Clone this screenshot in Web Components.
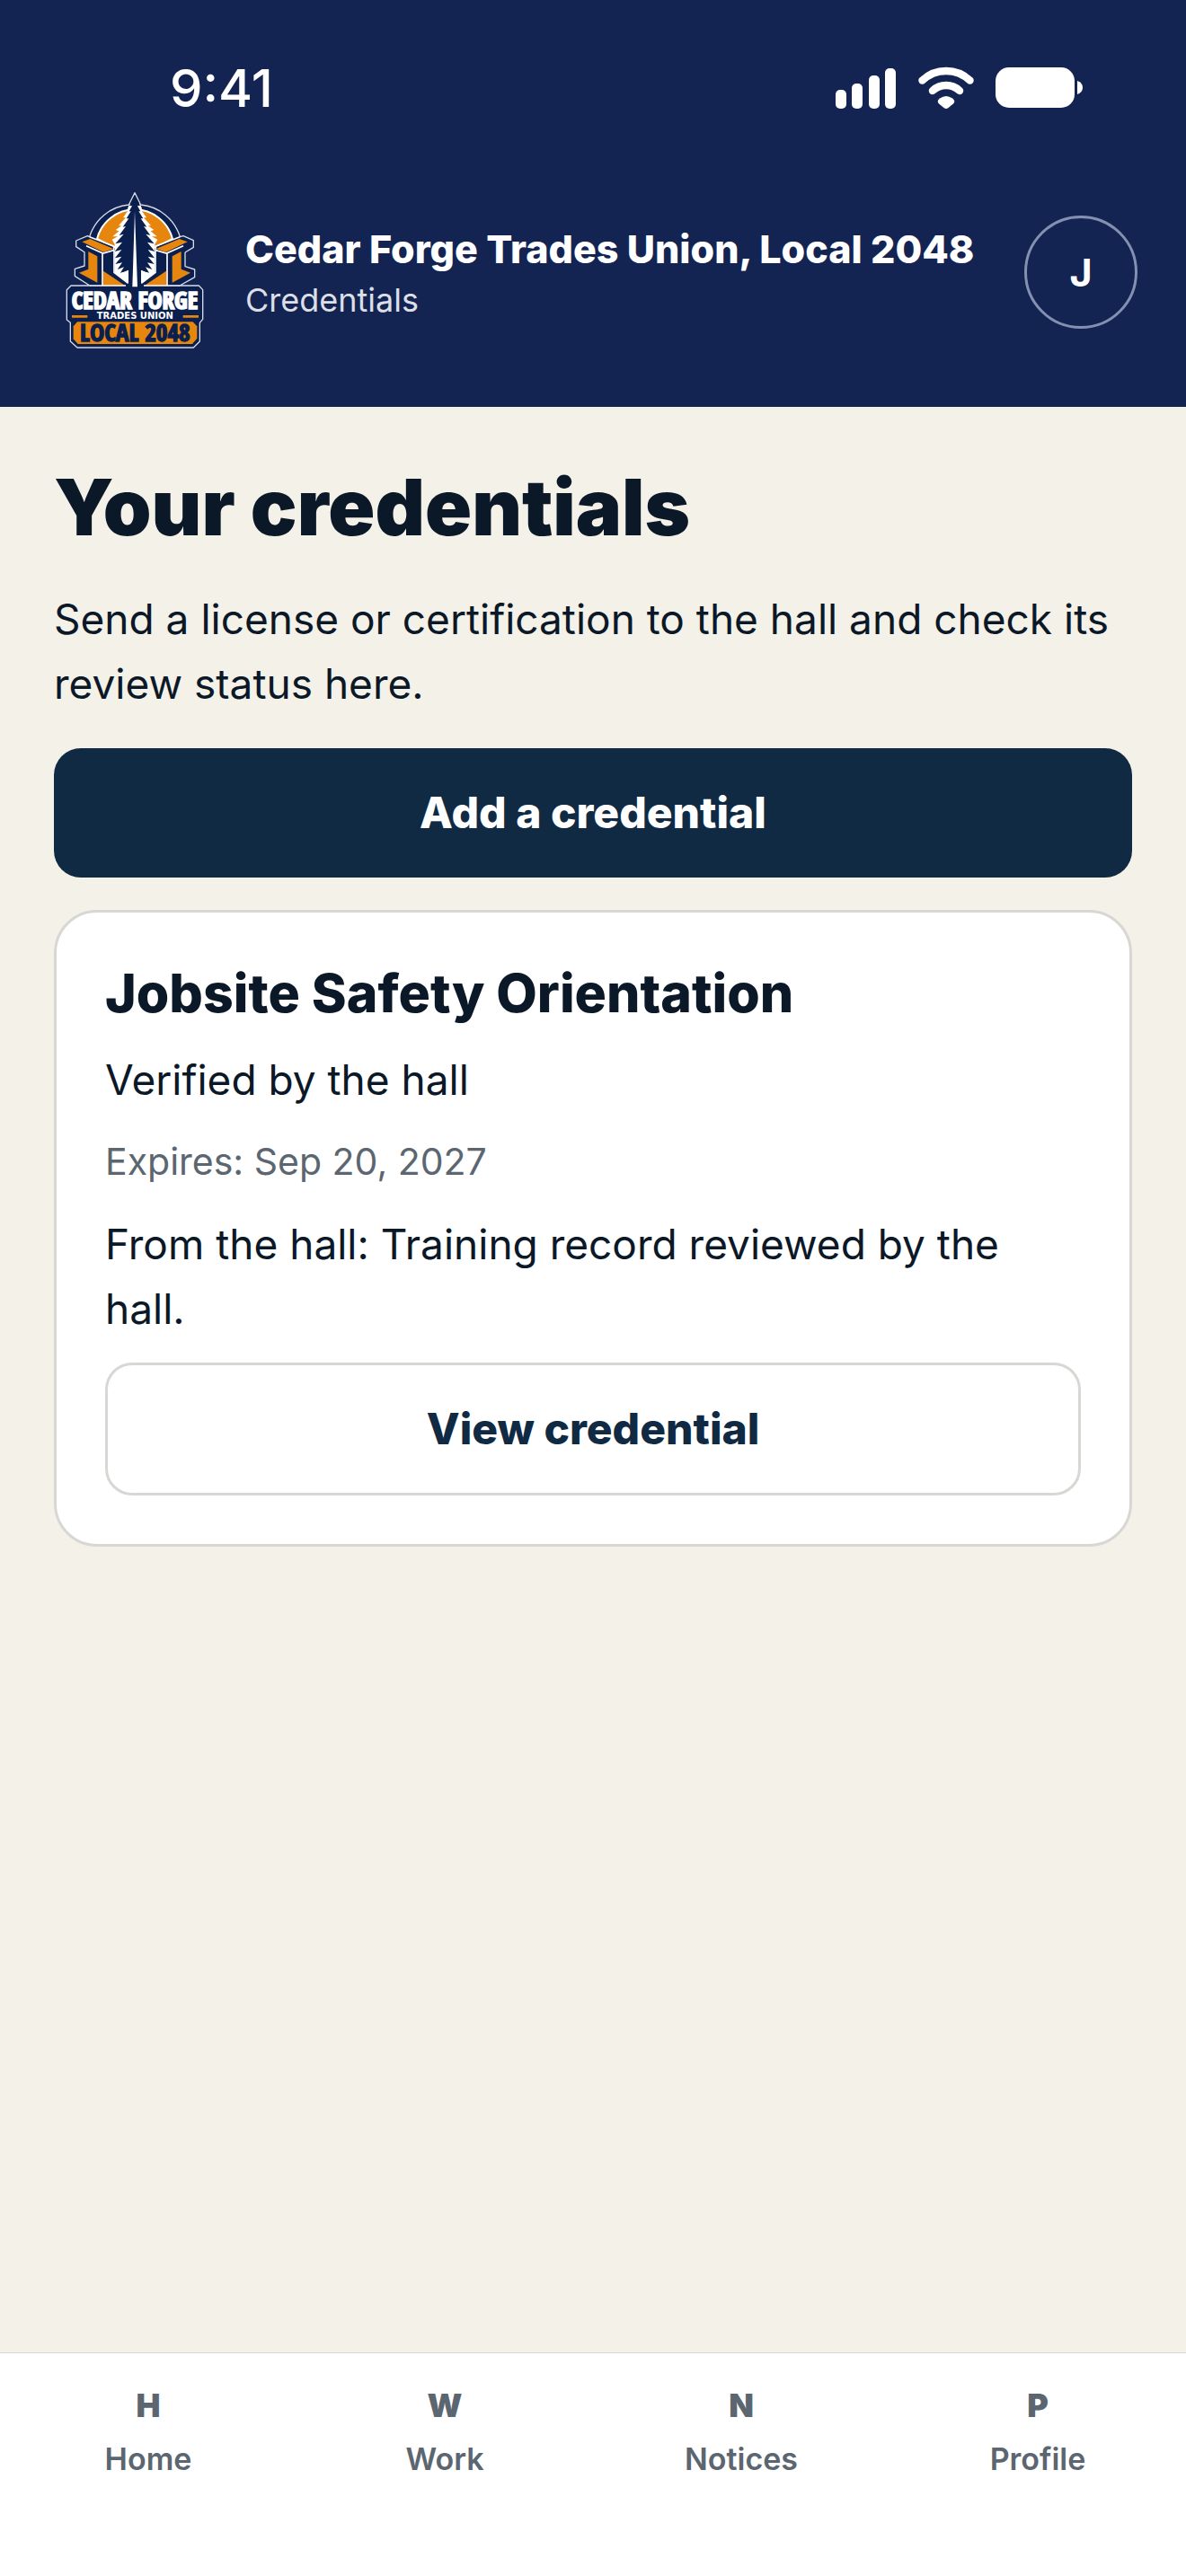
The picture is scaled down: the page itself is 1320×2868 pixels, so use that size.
<!DOCTYPE html>
<html lang="en">
<head>
<meta charset="utf-8">
<meta name="viewport" content="width=device-width, initial-scale=1">
<title>Credentials</title>
<style>
  body {
    margin: 0;
    font-family: Inter, "Liberation Sans", sans-serif;
    font-size: 46px;
    line-height: 72px;
    color: #0b1828;
    background: #f4f1e8;
    --navy: #142452;
    --ink: #102a43;
    --muted: #5b6670;
    --line: #d7d8d3;
  }
</style>
</head>
<body>
<credentials-app></credentials-app>

<script>
class StatusBar extends HTMLElement {
  constructor() {
    super();
    this.attachShadow({ mode: 'open' });
  }

  connectedCallback() {
    this.shadowRoot.innerHTML = `
      <style>
        :host {
          display: flex;
          justify-content: space-between;
          align-items: center;
          height: 195px;
          padding: 0 114px 0 189px;
          box-sizing: border-box;
          color: #fff;
        }
        time {
          font-size: 58px;
          font-weight: 500;
        }
        .icons {
          display: flex;
          align-items: center;
          gap: 24px;
        }
        svg { display: block; fill: #fff; }
      </style>
      <time>${this.getAttribute('time')}</time>
      <div class="icons">
        <svg width="68" height="48" viewBox="0 0 68 48" role="img" aria-label="Signal">
          <rect x="0" y="26" width="12" height="21" rx="5"/>
          <rect x="18" y="19" width="12" height="28" rx="5"/>
          <rect x="37" y="10" width="12" height="37" rx="5"/>
          <rect x="55" y="2" width="12" height="45" rx="5"/>
        </svg>
        <svg width="62" height="48" viewBox="0 0 62 48" role="img" aria-label="Wi-Fi">
          <path d="M4.500 15.500a38.500 38.500 0 0 1 53 0M16 27a22 22 0 0 1 30 0" fill="none" stroke="#fff" stroke-width="8.500" stroke-linecap="round"/>
          <path d="M24 35.500q7-5 14 0q4 3 1 6l-5.500 4.500q-2.500 2-5 0l-5.500-4.500q-3-3 1-6z"/>
        </svg>
        <svg width="98" height="46" viewBox="0 0 98 46" role="img" aria-label="Battery">
          <rect x="0" y="0" width="88" height="45" rx="15"/>
          <path d="M91 15q6 2 6 7.500t-6 7.500z"/>
        </svg>
      </div>
    `;
  }
}

class UnionLogo extends HTMLElement {
  constructor() {
    super();
    this.attachShadow({ mode: 'open' });
  }

  connectedCallback() {
    this.shadowRoot.innerHTML = `
      <style>
        :host { display: block; flex: none; }
        svg { display: block; }
        text { text-anchor: middle; font-weight: 700; }
        .narrow { font-family: "Open Sans Condensed", "Roboto Condensed", sans-serif; }
      </style>
      <svg width="192" height="192" viewBox="-18 21 576 576">
        <path fill="#0a1f4d" stroke="#d5dae6" stroke-width="4" stroke-linejoin="round"
          d="M270 44L290 84A152 152 0 0 1 421 191L432 188L466 203V226L438 243V290L470 300V326L420 354H484L497 368V466L487 478V540L466 561H78L55 540V478L43 468V368L57 354H120L70 322V298L102 288V242L74 224V204L112 188L119 191A152 152 0 0 1 250 84Z"/>
        <path fill="#e6860f" stroke="#fff" stroke-width="6" d="M144 198A130 130 0 0 1 396 198L340 226H200Z"/>
        <g id="half">
          <!-- snow edge and the lower white field -->
          <path fill="#fff" d="M253 80L245 98L251 98L231 127L240 127L216 154L226 154L206 168L217 172L196 190L213 190L194 200L203 216V312L249 346L270 330V80Z"/>
          <path fill="#0a1f4d" d="M270 52L252 86L261 88L251 106L257 106L242 130L250 130L230 158L240 156L218 186L233 182L205 214L228 209L203 240L226 234L204 262L226 257L205 282L228 277L212 300L234 292L220 314L249 302V352H270Z"/>
          <path fill="#fff" d="M249 303L248 346L226 328L205 314L236 308Z"/>
          <!-- steel beam -->
          <path fill="#0a1f4d" d="M84 204L118 193L201 226V312L250 354H128L76 322V302L106 292V242L84 226Z"/>
          <path fill="#e6860f" d="M94 208L121 198L199 231L166 242Z"/>
          <path fill="#e6860f" d="M115 240L145 256V344L84 311L115 299Z"/>
          <path fill="#e6860f" d="M165 305L238 354H165Z"/>
          <path fill="none" stroke="#fff" stroke-width="5" d="M119 191L200 222V236L164 246L108 221M162 246V354M201 236V310L248 346M120 354H240"/>
        </g>
        <use href="#half" transform="matrix(-1 0 0 1 540 0)"/>
        <path fill="#fff" d="M270 106L262 358H279Z"/>
        <path fill="#0a1f4d" d="M60 361H480L490 372V462L480 472H60L50 462V372Z"/>
        <path fill="#e6860f" d="M60 453H112V461H60ZM431 453H483V461H431Z"/>
        <path fill="#e6860f" d="M78 475H464L478 490V530L462 549H80L65 532V490Z"/>
        <text class="narrow" x="270" y="432" font-size="81" fill="#fff" stroke="#fff" stroke-width="5">CEDAR FORGE</text>
        <text x="271" y="466" font-size="30" font-family="DejaVu Sans, sans-serif" fill="#fff">TRADES UNION</text>
        <text class="narrow" x="271" y="541" font-size="82" fill="#0a1f4d" stroke="#0a1f4d" stroke-width="4">LOCAL 2048</text>
      </svg>
    `;
  }
}

class AppHeader extends HTMLElement {
  constructor() {
    super();
    this.attachShadow({ mode: 'open' });
  }

  connectedCallback() {
    this.shadowRoot.innerHTML = `
      <style>
        :host {
          display: block;
          color: #fff;
          background: var(--navy);
        }
        header {
          display: flex;
          align-items: center;
          gap: 27px;
          padding: 12px 54px 54px;
        }
        .titles {
          flex: 1;
          display: flex;
          flex-direction: column;
          gap: 6px;
        }
        .org {
          font-size: 43px;
          line-height: 56px;
          font-weight: 800;
        }
        .page {
          font-size: 36px;
          line-height: 46px;
          color: #dcdfe6;
        }
        button {
          width: 126px;
          height: 126px;
          padding: 0;
          border: 3px solid #8490b1;
          border-radius: 50%;
          background: none;
          color: #fff;
          font: inherit;
          font-size: 43px;
          font-weight: 700;
        }
      </style>
      <status-bar time="9:41"></status-bar>
      <header>
        <union-logo></union-logo>
        <div class="titles">
          <span class="org"><slot name="org"></slot></span>
          <span class="page"><slot name="page"></slot></span>
        </div>
        <button type="button">${this.getAttribute('initial')}</button>
      </header>
    `;
  }
}

class AppButton extends HTMLElement {
  constructor() {
    super();
    this.attachShadow({ mode: 'open' });
  }

  connectedCallback() {
    this.shadowRoot.innerHTML = `
      <style>
        :host { display: block; }
        button {
          display: block;
          width: 100%;
          padding: 36px;
          border: 0;
          border-radius: 30px;
          background: var(--ink);
          color: #fff;
          font: inherit;
          font-size: 48px;
          font-weight: 800;
        }
        :host([outline]) button {
          padding: 35px;
          border: 3px solid var(--line);
          background: #fff;
          color: var(--ink);
        }
      </style>
      <button type="button"><slot></slot></button>
    `;
  }
}

class CredentialCard extends HTMLElement {
  constructor() {
    super();
    this.attachShadow({ mode: 'open' });
  }

  connectedCallback() {
    this.shadowRoot.innerHTML = `
      <style>
        :host { display: block; }
        article {
          display: flex;
          flex-direction: column;
          gap: 24px;
          padding: 54px;
          border: 3px solid var(--line);
          border-radius: 48px;
          background: #fff;
        }
        h2, p { margin: 0; }
        h2 {
          font-size: 59px;
          line-height: 72px;
          font-weight: 800;
        }
        .expires {
          font-size: 41px;
          line-height: 63px;
          color: var(--muted);
        }
      </style>
      <article>
        <h2><slot name="title"></slot></h2>
        <p><slot name="status"></slot></p>
        <p class="expires"><slot name="expires"></slot></p>
        <p><slot name="note"></slot></p>
        <app-button outline>View credential</app-button>
      </article>
    `;
  }
}

class TabBar extends HTMLElement {
  constructor() {
    super();
    this.attachShadow({ mode: 'open' });
  }

  connectedCallback() {
    const tabs = ['Home', 'Work', 'Notices', 'Profile'];

    this.shadowRoot.innerHTML = `
      <style>
        :host {
          display: block;
          border-top: 1px solid var(--line);
          background: #fff;
        }
        nav {
          display: grid;
          grid-template-columns: repeat(4, 1fr);
          padding: 37px 0 109px;
        }
        a {
          display: flex;
          flex-direction: column;
          align-items: center;
          gap: 18px;
          color: var(--muted);
          font-size: 34px;
          line-height: 42px;
          font-weight: 600;
          text-decoration: none;
        }
        b {
          font-size: 36px;
          font-weight: 900;
        }
      </style>
      <nav>
        ${tabs.map((tab) => `<a href="#${tab.toLowerCase()}"><b>${tab[0]}</b><span>${tab}</span></a>`).join('')}
      </nav>
    `;
  }
}

class CredentialsApp extends HTMLElement {
  constructor() {
    super();
    this.attachShadow({ mode: 'open' });
  }

  connectedCallback() {
    this.shadowRoot.innerHTML = `
      <style>
        :host {
          display: flex;
          flex-direction: column;
          min-height: 100vh;
        }
        main {
          flex: 1;
          display: flex;
          flex-direction: column;
          gap: 36px;
          padding: 60px;
        }
        h1, p { margin: 0; }
        h1 {
          font-size: 86px;
          line-height: 104px;
          font-weight: 900;
        }
      </style>
      <app-header initial="J">
        <span slot="org">Cedar Forge Trades Union, Local 2048</span>
        <span slot="page">Credentials</span>
      </app-header>
      <main>
        <h1>Your credentials</h1>
        <p>Send a license or certification to the hall and check its review status here.</p>
        <app-button>Add a credential</app-button>
        <credential-card>
          <span slot="title">Jobsite Safety Orientation</span>
          <span slot="status">Verified by the hall</span>
          <span slot="expires">Expires: Sep 20, 2027</span>
          <span slot="note">From the hall: Training record reviewed by the hall.</span>
        </credential-card>
      </main>
      <tab-bar></tab-bar>
    `;
  }
}

customElements.define('status-bar', StatusBar);
customElements.define('union-logo', UnionLogo);
customElements.define('app-header', AppHeader);
customElements.define('app-button', AppButton);
customElements.define('credential-card', CredentialCard);
customElements.define('tab-bar', TabBar);
customElements.define('credentials-app', CredentialsApp);
</script>
</body>
</html>
